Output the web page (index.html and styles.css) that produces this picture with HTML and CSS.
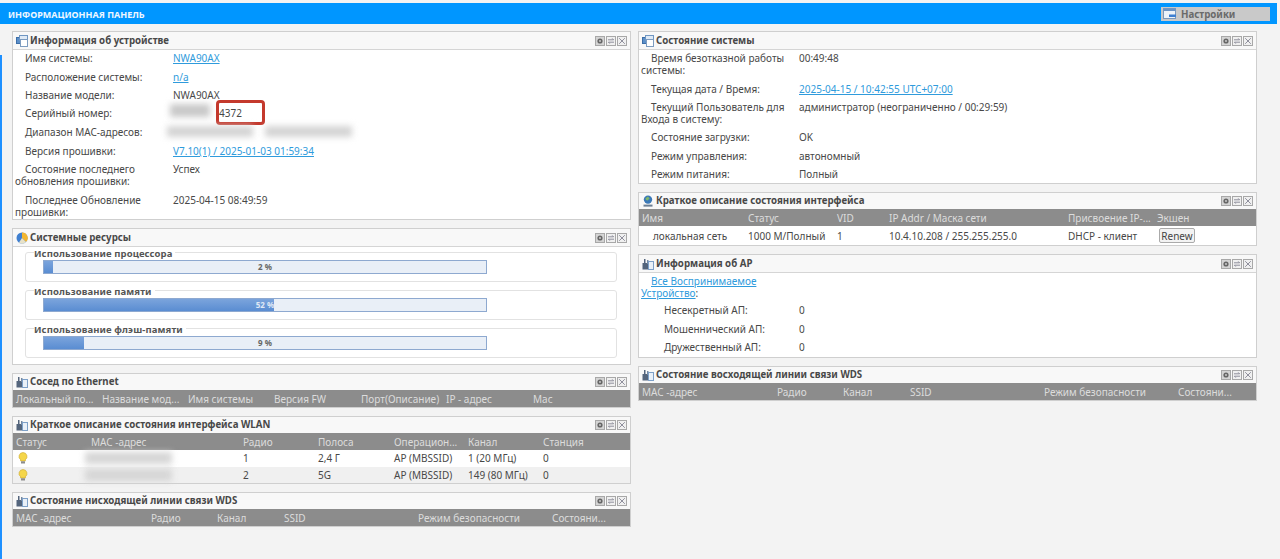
FILE: index.html
```html
<!DOCTYPE html>
<html lang="ru">
<head>
  <meta charset="UTF-8" />
  <title>Информационная панель</title>
  <link rel="stylesheet" href="styles.css">
</head>
<body>

  <svg class="sprite" width="0" height="0">
    <symbol id="i-window" viewBox="0 0 12 12">
      <rect x="0.5" y="2.5" width="6" height="6" fill="#5b8fc9" stroke="#3c6ea8"/>
      <rect x="3.5" y="0.5" width="8" height="5" fill="#dfeaf6" stroke="#6f96c2"/>
      <rect x="4.5" y="4.5" width="7" height="7" fill="#fff" stroke="#7d9cc0"/>
    </symbol>
    <symbol id="i-pie" viewBox="0 0 12 12">
      <circle cx="6" cy="6" r="5.5" fill="#3f7fd0"/>
      <path d="M6 6V0.5A5.5 5.5 0 0 1 10 10Z" fill="#f2b632"/>
      <path d="M6 6L10 10A5.5 5.5 0 0 1 3 10.6Z" fill="#e8e2c8"/>
    </symbol>
    <symbol id="i-signal" viewBox="0 0 12 12">
      <rect x="0.5" y="5" width="6" height="6.5" fill="#54657c"/>
      <rect x="2" y="1" width="1.5" height="5" fill="#54657c"/>
      <rect x="5" y="2" width="1.5" height="4" fill="#7488a0"/>
      <rect x="6.5" y="3.5" width="5" height="8" fill="#e9f0f8" stroke="#7da0c8"/>
    </symbol>
    <symbol id="i-globe" viewBox="0 0 12 12">
      <circle cx="6" cy="4.6" r="4.2" fill="#3a78b8"/>
      <path d="M3.5 3.2L6 1.6L7.6 3.4L5.6 5.6L4 5Z" fill="#7fb76a"/>
      <rect x="1.5" y="9.6" width="9" height="2" fill="#6c7f94"/>
    </symbol>
    <symbol id="i-gear" viewBox="0 0 10 10">
      <rect x="0.5" y="0.5" width="9" height="9" fill="#d4d4d4" stroke="#a8a8a8"/>
      <circle cx="5" cy="5" r="2.6" fill="#666"/>
      <circle cx="5" cy="5" r="0.9" fill="#d4d4d4"/>
    </symbol>
    <symbol id="i-refresh" viewBox="0 0 10 10">
      <rect x="0.5" y="0.5" width="9" height="9" fill="#f0f0f0" stroke="#a8a8a8"/>
      <path d="M2 3.8H7.6L6.2 2.4M8 6.2H2.4L3.8 7.6" fill="none" stroke="#778" stroke-width="0.8"/>
    </symbol>
    <symbol id="i-close" viewBox="0 0 10 10">
      <rect x="0.5" y="0.5" width="9" height="9" fill="#f0f0f0" stroke="#a8a8a8"/>
      <path d="M2.2 2.2L7.8 7.8M7.8 2.2L2.2 7.8" stroke="#778" stroke-width="0.8"/>
    </symbol>
    <symbol id="i-bulb" viewBox="0 0 10 12">
      <path d="M5 0.5A4 4 0 0 1 7.4 7.7V9H2.6V7.7A4 4 0 0 1 5 0.5Z" fill="#f5d64a" stroke="#c9a62a" stroke-width="0.6"/>
      <rect x="3" y="9.3" width="4" height="2.2" fill="#8d8d8d"/>
    </symbol>
    <symbol id="i-settings" viewBox="0 0 14 12">
      <rect x="0.5" y="0.5" width="12" height="10" fill="#eef3f9" stroke="#7a99bd"/>
      <rect x="0.5" y="0.5" width="12" height="2.5" fill="#6b93c4"/>
      <path d="M6 6.5H13V9H6Z" fill="#3f7fd0"/>
    </symbol>
  </svg>

  <header class="topbar">
    <span class="topbar-title">ИНФОРМАЦИОННАЯ ПАНЕЛЬ</span>
    <button class="settings-btn"><svg class="icon-settings"><use href="#i-settings"/></svg>Настройки</button>
  </header>

  <div class="page">
    <div class="edge"></div>
    <main class="columns">

      <div class="column">

        <section class="panel panel-device">
          <div class="panel-head">
            <svg class="icon"><use href="#i-window"/></svg>
            <span class="panel-title">Информация об устройстве</span>
            <span class="tools"><svg><use href="#i-gear"/></svg><svg><use href="#i-refresh"/></svg><svg><use href="#i-close"/></svg></span>
          </div>
          <div class="info">
            <div class="info-row"><div class="label">Имя системы:</div><div class="value"><a href="#">NWA90AX</a></div></div>
            <div class="info-row"><div class="label">Расположение системы:</div><div class="value"><a href="#">n/a</a></div></div>
            <div class="info-row"><div class="label">Название модели:</div><div class="value">NWA90AX</div></div>
            <div class="info-row"><div class="label">Серийный номер:</div><div class="value serial"><span class="smudge smudge-serial"></span>4372<span class="marker"></span></div></div>
            <div class="info-row"><div class="label">Диапазон MAC-адресов:</div><div class="value"><span class="smudge smudge-mac1"></span><span class="smudge smudge-mac2"></span></div></div>
            <div class="info-row"><div class="label">Версия прошивки:</div><div class="value"><a href="#">V7.10(1) / 2025-01-03 01:59:34</a></div></div>
            <div class="info-row"><div class="label">Состояние последнего обновления прошивки:</div><div class="value">Успех</div></div>
            <div class="info-row"><div class="label">Последнее Обновление прошивки:</div><div class="value">2025-04-15 08:49:59</div></div>
          </div>
        </section>

        <section class="panel panel-res">
          <div class="panel-head">
            <svg class="icon"><use href="#i-pie"/></svg>
            <span class="panel-title">Системные ресурсы</span>
            <span class="tools"><svg><use href="#i-gear"/></svg><svg><use href="#i-refresh"/></svg><svg><use href="#i-close"/></svg></span>
          </div>
          <div class="resources">
            <fieldset class="usage">
              <legend>Использование процессора</legend>
              <div class="bar"><div class="bar-fill" style="width: 2%"></div><span class="bar-text">2 %</span></div>
            </fieldset>
            <fieldset class="usage">
              <legend>Использование памяти</legend>
              <div class="bar"><div class="bar-fill" style="width: 52%"></div><span class="bar-text on-fill">52 %</span></div>
            </fieldset>
            <fieldset class="usage">
              <legend>Использование флэш-памяти</legend>
              <div class="bar"><div class="bar-fill" style="width: 9%"></div><span class="bar-text">9 %</span></div>
            </fieldset>
          </div>
        </section>

        <section class="panel">
          <div class="panel-head table-head">
            <svg class="icon"><use href="#i-signal"/></svg>
            <span class="panel-title">Сосед по Ethernet</span>
            <span class="tools"><svg><use href="#i-gear"/></svg><svg><use href="#i-refresh"/></svg><svg><use href="#i-close"/></svg></span>
          </div>
          <div class="grid-row grid-head cols-eth">
            <span>Локальный по...</span><span>Название мод...</span><span>Имя системы</span><span>Версия FW</span><span>Порт(Описание)</span><span>IP - адрес</span><span>Мас</span>
          </div>
        </section>

        <section class="panel">
          <div class="panel-head table-head">
            <svg class="icon"><use href="#i-signal"/></svg>
            <span class="panel-title">Краткое описание состояния интерфейса WLAN</span>
            <span class="tools"><svg><use href="#i-gear"/></svg><svg><use href="#i-refresh"/></svg><svg><use href="#i-close"/></svg></span>
          </div>
          <div class="grid-row grid-head cols-wlan">
            <span>Статус</span><span>MAC -адрес</span><span>Радио</span><span>Полоса</span><span>Операцион...</span><span>Канал</span><span>Станция</span>
          </div>
          <div class="grid-row cols-wlan">
            <span><svg class="icon-bulb"><use href="#i-bulb"/></svg></span><span><span class="smudge smudge-wlan"></span></span><span>1</span><span>2,4 Г</span><span>AP (MBSSID)</span><span>1 (20 МГц)</span><span>0</span>
          </div>
          <div class="grid-row row-alt cols-wlan">
            <span><svg class="icon-bulb"><use href="#i-bulb"/></svg></span><span><span class="smudge smudge-wlan"></span></span><span>2</span><span>5G</span><span>AP (MBSSID)</span><span>149 (80 МГц)</span><span>0</span>
          </div>
        </section>

        <section class="panel">
          <div class="panel-head table-head">
            <svg class="icon"><use href="#i-signal"/></svg>
            <span class="panel-title">Состояние нисходящей линии связи WDS</span>
            <span class="tools"><svg><use href="#i-gear"/></svg><svg><use href="#i-refresh"/></svg><svg><use href="#i-close"/></svg></span>
          </div>
          <div class="grid-row grid-head cols-wds">
            <span>MAC -адрес</span><span>Радио</span><span>Канал</span><span>SSID</span><span>Режим безопасности</span><span>Состояни...</span>
          </div>
        </section>

      </div>

      <div class="column">

        <section class="panel panel-state">
          <div class="panel-head">
            <svg class="icon"><use href="#i-window"/></svg>
            <span class="panel-title">Состояние системы</span>
            <span class="tools"><svg><use href="#i-gear"/></svg><svg><use href="#i-refresh"/></svg><svg><use href="#i-close"/></svg></span>
          </div>
          <div class="info">
            <div class="info-row"><div class="label">Время безотказной работы системы:</div><div class="value">00:49:48</div></div>
            <div class="info-row"><div class="label">Текущая дата / Время:</div><div class="value"><a href="#">2025-04-15 / 10:42:55 UTC+07:00</a></div></div>
            <div class="info-row"><div class="label">Текущий Пользователь для Входа в систему:</div><div class="value">администратор (неограниченно / 00:29:59)</div></div>
            <div class="info-row"><div class="label">Состояние загрузки:</div><div class="value">OK</div></div>
            <div class="info-row"><div class="label">Режим управления:</div><div class="value">автономный</div></div>
            <div class="info-row"><div class="label">Режим питания:</div><div class="value">Полный</div></div>
          </div>
        </section>

        <section class="panel">
          <div class="panel-head table-head">
            <svg class="icon"><use href="#i-globe"/></svg>
            <span class="panel-title">Краткое описание состояния интерфейса</span>
            <span class="tools"><svg><use href="#i-gear"/></svg><svg><use href="#i-refresh"/></svg><svg><use href="#i-close"/></svg></span>
          </div>
          <div class="grid-row grid-head cols-iface">
            <span>Имя</span><span>Статус</span><span>VID</span><span>IP Addr / Маска сети</span><span>Присвоение IP-...</span><span>Экшен</span>
          </div>
          <div class="grid-row row-iface cols-iface">
            <span class="lan-name">локальная сеть</span><span>1000 М/Полный</span><span>1</span><span>10.4.10.208 / 255.255.255.0</span><span>DHCP - клиент</span><span><button class="renew">Renew</button></span>
          </div>
        </section>

        <section class="panel panel-ap">
          <div class="panel-head">
            <svg class="icon"><use href="#i-signal"/></svg>
            <span class="panel-title">Информация об АР</span>
            <span class="tools"><svg><use href="#i-gear"/></svg><svg><use href="#i-refresh"/></svg><svg><use href="#i-close"/></svg></span>
          </div>
          <div class="ap-body">
            <div class="ap-link ap-link-first"><a href="#">Все Воспринимаемое</a></div>
            <div class="ap-link"><a href="#">Устройство</a>:</div>
            <div class="ap-row"><div>Несекретный АП:</div><div>0</div></div>
            <div class="ap-row"><div>Мошеннический АП:</div><div>0</div></div>
            <div class="ap-row"><div>Дружественный АП:</div><div>0</div></div>
          </div>
        </section>

        <section class="panel">
          <div class="panel-head table-head">
            <svg class="icon"><use href="#i-signal"/></svg>
            <span class="panel-title">Состояние восходящей линии связи WDS</span>
            <span class="tools"><svg><use href="#i-gear"/></svg><svg><use href="#i-refresh"/></svg><svg><use href="#i-close"/></svg></span>
          </div>
          <div class="grid-row grid-head cols-wds">
            <span>MAC -адрес</span><span>Радио</span><span>Канал</span><span>SSID</span><span>Режим безопасности</span><span>Состояни...</span>
          </div>
        </section>

      </div>
    </main>
  </div>

</body>
</html>
```

FILE: styles.css
```css
* {
  box-sizing: border-box;
}

html, body {
  height: 559px;
  overflow: hidden;
}

body {
  margin: 0;
  padding-top: 3px;
  background: #f3f3f3;
  color: #484848;
  font-family: "Noto Sans", "Open Sans", sans-serif;
  font-size: 10px;
}

a {
  color: #2f9bdc;
}

.sprite {
  display: block;
  height: 0;
}

/* top bar */
.topbar {
  width: 1277px;
  height: 21px;
  padding: 4px 7px 3px 8px;
  background: #0096ff;
  display: flex;
  justify-content: space-between;
  align-items: center;
}

.topbar-title {
  color: #eef6ff;
  font-size: 9px;
  font-weight: bold;
}

.settings-btn {
  width: 109px;
  height: 14px;
  padding: 0 0 0 2px;
  border: none;
  background: #c9c9c9;
  color: #6a6a6a;
  font-family: inherit;
  font-size: 9.7px;
  font-weight: bold;
  display: flex;
  align-items: center;
  gap: 4px;
}

.icon-settings {
  width: 14px;
  height: 12px;
}

/* page */
.page {
  display: flex;
}

.edge {
  width: 2px;
  height: 504px;
  margin-top: 31px;
  background: #1e90ff;
}

.columns {
  display: flex;
  gap: 7px;
  padding: 7px 0 0 10px;
}

.column {
  width: 619px;
  display: flex;
  flex-direction: column;
  gap: 8px;
}

/* panels */
.panel {
  border: 1px solid #cfcfcf;
  background: #fff;
}

.panel-device {
  height: 189px;
}

.panel-state {
  height: 153px;
}

.panel-ap {
  height: 104px;
}

.panel-res {
  height: 137px;
}

.panel-head {
  height: 17px;
  padding: 0 3px;
  background: #f8f8f8;
  display: flex;
  align-items: center;
  gap: 2px;
}

.table-head {
  height: 16px;
  padding-bottom: 1px;
}

.icon {
  width: 12px;
  height: 12px;
}

.panel-title {
  color: #484848;
  font-size: 9.7px;
  font-weight: bold;
}

.tools {
  margin-left: auto;
  display: flex;
  gap: 1px;
}

.tools svg {
  width: 10px;
  height: 10px;
}

/* label / value lists */
.info {
  border-top: 1px solid #d5d5d5;
  padding: 0 0 0 2px;
}

.info-row {
  display: flex;
  padding: 3.2px 0;
  line-height: 12px;
}

.info-row:first-child {
  margin-top: -1px;
}

.label {
  width: 158px;
  text-indent: 10px;
}

.value {
  position: relative;
}

.serial {
  padding-left: 46px;
}

.smudge {
  display: inline-block;
  background: #c9c9c9;
  filter: blur(3px);
}

.smudge-serial {
  position: absolute;
  left: -3px;
  top: -3px;
  width: 40px;
  height: 13px;
}

.smudge-mac1 {
  width: 86px;
  height: 11px;
  margin: 0 12px 0 -6px;
  background: #d4d4d4;
}

.smudge-mac2 {
  width: 87px;
  height: 11px;
  background: #d4d4d4;
}

.smudge-wlan {
  display: block;
  width: 87px;
  height: 12px;
  margin-left: -6px;
  background: #d6d6d6;
}

/* red mark round the serial number */
.marker {
  position: absolute;
  left: 43px;
  top: -7px;
  width: 49px;
  height: 25px;
  border: 3px solid #c4392d;
  border-radius: 4px;
}

/* resources */
.resources {
  border-top: 1px solid #d5d5d5;
  padding: 3px 13px 0 12px;
}

.usage {
  height: 32px;
  margin: 0 0 6px;
  padding: 0 0 0 17px;
  border: 1px solid #e2e2e2;
  border-radius: 3px;
}

.usage legend {
  margin-left: -9px;
  padding: 4px 3px 0 0;
  line-height: 0;
  font-size: 9.5px;
  font-weight: bold;
  letter-spacing: 0.1px;
  color: #555;
}

.bar {
  position: relative;
  width: 444px;
  height: 14px;
  margin-top: 6px;
  border: 1px solid #8ea9d0;
  background: #e9eff7;
  text-align: center;
  line-height: 12px;
  font-size: 8px;
  font-weight: bold;
  color: #666;
}

.bar-fill {
  height: 100%;
  background: linear-gradient(#7ba4dc, #5a8dd2);
}

.bar-text {
  position: absolute;
  left: 0;
  right: 0;
  top: 0;
}

.on-fill {
  color: #dfe8f5;
}

/* grey-headed lists */
.grid-row {
  display: grid;
  height: 16.5px;
  padding-left: 3px;
  align-items: center;
  white-space: nowrap;
}

.grid-head {
  height: 17px;
  background: #8c8c8c;
  color: #dcdcdc;
}

.row-alt {
  background: #f0f0f0;
}

.cols-eth {
  grid-template-columns: 86px 86px 86px 87px 85px 87px 1fr;
}

.cols-wlan {
  grid-template-columns: 75px 152px 75px 76px 74px 75px 1fr;
}

.cols-wds {
  grid-template-columns: 135px 66px 67px 134px 134px 1fr;
}

.cols-iface {
  grid-template-columns: 106px 89px 52px 179px 89px 1fr;
}

.row-iface {
  height: 19px;
}

.lan-name {
  padding-left: 11px;
}

.renew {
  display: block;
  width: 36px;
  height: 15px;
  padding: 0;
  margin-left: 2px;
  border: 1px solid #aaa;
  border-radius: 2px;
  background: #f3f3f3;
  color: #444;
  font-family: inherit;
  font-size: 10px;
}

.icon-bulb {
  display: block;
  width: 10px;
  height: 12px;
  margin-left: 2px;
}

/* AP info */
.ap-body {
  border-top: 1px solid #d5d5d5;
  padding: 2px 0 0 2px;
}

.ap-link {
  line-height: 12px;
  margin-bottom: 1px;
}

.ap-link-first {
  margin-bottom: 0;
  padding-left: 10px;
}

.ap-row {
  display: flex;
  padding: 3.2px 0;
  line-height: 12px;
}

.ap-row:nth-child(3) {
  margin-top: 2px;
}

.ap-row div:first-child {
  width: 135px;
  margin-left: 23px;
}
```
